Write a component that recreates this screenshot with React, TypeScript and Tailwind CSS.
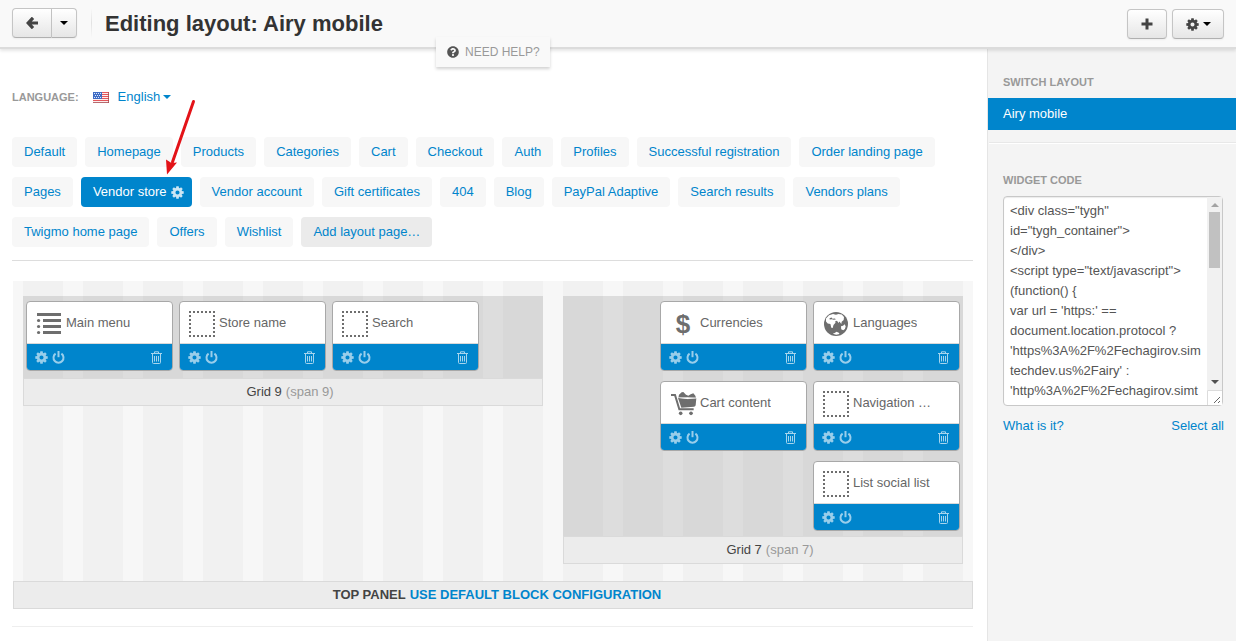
import type { ReactNode } from "react";
import { FaQuestionCircle } from "react-icons/fa";

function Gear({ className = "" }: { className?: string }) {
  return (
    <svg viewBox="0 0 14 14" className={`size-[13px] shrink-0 ${className}`} aria-hidden="true">
      <circle cx="7" cy="7" r="3.65" fill="none" stroke="currentColor" strokeWidth="2.9" />
      {[0, 45, 90, 135, 180, 225, 270, 315].map((a) => (
        <path key={a} d="M5.4 2.8 5.7.3h2.6l.3 2.5z" fill="currentColor" transform={`rotate(${a} 7 7)`} />
      ))}
    </svg>
  );
}

function Power() {
  return (
    <svg viewBox="0 0 13 13" className="size-[13px] opacity-60" fill="none" stroke="currentColor" aria-hidden="true">
      <path d="M3.6 2.6a5 5 0 1 0 5.8 0" strokeWidth="2" />
      <path d="M6.5 0v6.2" strokeWidth="2" />
    </svg>
  );
}

function Trash() {
  return (
    <svg viewBox="0 0 11 13" className="h-[13px] w-[11px] opacity-65" fill="none" stroke="currentColor" aria-hidden="true">
      <path d="M0 2.5h11M3.5 2.5V.8h4v1.7M1.5 2.5v9q0 1 1 1h6q1 0 1-1v-9M3.5 5v5.5M5.5 5v5.5M7.5 5v5.5" />
    </svg>
  );
}

function Caret({ className = "" }: { className?: string }) {
  return (
    <svg viewBox="0 0 8 4" className={`h-1 w-2 shrink-0 ${className}`} fill="currentColor" aria-hidden="true">
      <path d="M0 0h8L4 4z" />
    </svg>
  );
}

function Flag() {
  return (
    <svg viewBox="0 0 16 11" className="h-[11px] w-4 shrink-0" aria-hidden="true">
      <path fill="#fbeeee" d="M0 0h16v11H0z" />
      <path stroke="#e4565b" d="M0 .5h16M0 2.5h16M0 4.5h16M0 6.5h16M0 8.5h16" />
      <path stroke="#a8494d" d="M0 10.5h16M15.5 0v11" strokeOpacity=".8" />
      <path fill="#3f6cc4" d="M0 0h9v7H0z" />
      <path stroke="#dfe9fa" strokeDasharray="1 1" d="M1 1.5h7M2 3.5h6M1 5.5h7" />
    </svg>
  );
}

const DottedIcon = () => (
  <svg viewBox="0 0 26 26" className="size-[26px]" stroke="#6e6e6e" strokeWidth="2" strokeDasharray="2 2" aria-hidden="true">
    <path fill="none" d="M0 1h26M0 25h26M1 4v20M25 4v20" />
  </svg>
);

const MenuIcon = () => (
  <svg viewBox="0 0 26 26" className="size-[26px]" fill="#6e6e6e" aria-hidden="true">
    <path d="M1 2h24v3H1zM7 8h18v3H7zM7 14h18v3H7zM7 20h18v3H7z" />
    <circle cx="2.6" cy="9.5" r="1.6" />
    <circle cx="2.6" cy="15.5" r="1.6" />
    <circle cx="2.6" cy="21.5" r="1.6" />
  </svg>
);

const DollarIcon = () => (
  <span className="w-[26px] text-center text-[26px] leading-[26px] font-bold text-[#6e6e6e]">$</span>
);

const GlobeIcon = () => (
  <svg viewBox="-1 -1 26 26" className="size-[26px]" aria-hidden="true">
    <circle cx="12" cy="12" r="12" fill="#6e6e6e" />
    <path
      fill="#fff"
      d="M2 6.5 5 3.300 9 2l3 .7L14.500 2l3.300.6L20 5l-.3 3-2 1.800L17.300 12l-1.800-2.500-1 1.500-1.500-2.300-1.800.5.300 1.500-2 2.300-.8 3-1.400-.2L6.400 12l-2.700-.4L2 9.500z"
    />
    <path fill="#6e6e6e" d="m5.500 6.200 2-.7 1 1.200 2.500-.2.800 1-2.300.2-1.500-.4-2.300.2z" />
    <path fill="#fff" d="m17 14.300 2-.5 1.700-1.600 1 2.300-.8 2.500-1.700 1.200-2-.9zM8.700 21.800l2-.8 1.800-1.200 2.300.9.700 1.300-3.300.7z" />
  </svg>
);

const CartIcon = () => (
  <svg viewBox="345 333 78 78" className="size-[26px] overflow-visible" aria-hidden="true">
    <path fill="none" stroke="#6e6e6e" strokeWidth="6" d="M348 345h12l13 43h43" />
    <path fill="#6e6e6e" d="m370 353 2-9 8-7 5-1 8 8 7 3 7-4 8-3 6 7 2 6-26-1z" />
    <path fill="#6e6e6e" d="m369 354 28 3 27-2-2 21q-1 4-5 4l-38 3z" />
    <path fill="none" stroke="#fff" strokeWidth="1.6" d="m370 352 28 4 26-2" />
    <circle cx="377" cy="400" r="5.5" fill="#6e6e6e" />
    <circle cx="408" cy="400" r="5.5" fill="#6e6e6e" />
  </svg>
);

function Block({ name, icon = <DottedIcon /> }: { name: string; icon?: ReactNode }) {
  return (
    <article className="w-[147px] overflow-hidden rounded border border-[#a8a8a8] bg-white">
      <div className="flex h-[42px] gap-1 border-b border-[#d9d9d9] pt-[9px] pr-2 pl-[9px]">
        <span className="flex size-[26px] shrink-0">{icon}</span>
        <span className="truncate pt-[2px] text-[#666]">{name}</span>
      </div>
      <div className="flex h-[26px] items-center gap-1 bg-[#0085cc] pr-[10px] pl-2 text-white">
        <button type="button" aria-label={`${name} settings`}>
          <Gear className="opacity-60" />
        </button>
        <button type="button" aria-label={`Switch ${name} off`}>
          <Power />
        </button>
        <button type="button" aria-label={`Delete ${name}`} className="ml-auto">
          <Trash />
        </button>
      </div>
    </article>
  );
}

function GridFooter({ name, span }: { name: string; span: number }) {
  return (
    <footer className="flex h-7 items-center justify-center gap-1 border border-[#dadada] bg-[#ececec] pl-[14px]">
      <span className="text-[#444]">{name}</span>
      <span className="text-[#999]">(span {span})</span>
    </footer>
  );
}

function ScrollTrack() {
  return (
    <div className="pointer-events-none absolute top-px right-px flex h-52 w-[15px] flex-col items-center bg-[#f1f1f1]" aria-hidden="true">
      <svg viewBox="0 0 8 4" className="mt-[6px] h-1 w-2" fill="#a3a3a3">
        <path d="M0 4h8L4 0z" />
      </svg>
      <div className="mt-[5px] h-14 w-[11px] bg-[#c1c1c1]" />
      <Caret className="mt-auto mb-[6px] text-[#505050]" />
      <svg viewBox="0 0 15 15" className="size-[15px] bg-white" fill="none">
        <path d="M.5 15V.5H15" stroke="#dcdcdc" />
        <path d="m7 13 6-6m-2 6 2-2" stroke="#666" />
      </svg>
    </div>
  );
}

const tabs = [
  "Default", "Homepage", "Products", "Categories", "Cart", "Checkout", "Auth", "Profiles",
  "Successful registration", "Order landing page", "Pages", "Vendor store", "Vendor account",
  "Gift certificates", "404", "Blog", "PayPal Adaptive", "Search results", "Vendors plans",
  "Twigmo home page", "Offers", "Wishlist",
];

const widgetCode = `<div class="tygh" id="tygh_container">
</div>
<script type="text/javascript">
(function() {
var url = 'https:' == document.location.protocol ? 'https%3A%2F%2Fechagirov.simtechdev.us%2Fairy' : 'http%3A%2F%2Fechagirov.simtechdev.us%2Fairy';
`;

const buttonLook =
  "flex h-[30px] items-center justify-center border border-[#c5c5c5] border-b-[#b0b0b0] bg-linear-to-b from-white to-[#e6e6e6] text-[#444] shadow-xs";

export default function App() {
  return (
    <div className="flex min-h-screen flex-col bg-white font-['Liberation_Sans',Arial,sans-serif] text-[13px] leading-5 text-[#444]">
      <header className="relative z-10 flex h-[49px] items-start border-b-2 border-[#dcdcdc] bg-[#f9f9f9] px-3 pt-2 shadow-[0_2px_3px_rgba(0,0,0,0.1)]">
        <div className="flex">
          <button type="button" aria-label="Back" className={`${buttonLook} w-10 rounded-l`}>
            <svg viewBox="0 0 12 12" className="size-3" fill="none" stroke="currentColor" strokeWidth="3.2" aria-hidden="true">
              <path d="M7 .8 2.2 6 7 11.2M2.500 6H12" />
            </svg>
          </button>
          <button type="button" aria-label="Recent pages" className={`${buttonLook} w-[25px] rounded-r border-l-0`}>
            <Caret className="text-black" />
          </button>
        </div>
        <div className="ml-[14px] h-[30px] w-px bg-linear-to-b from-[#f9f9f9] via-[#e2e2e2] to-[#f9f9f9]" />
        <h1 className="ml-[13px] text-[22px] leading-8 font-bold text-[#333]">Editing layout: Airy mobile</h1>
        <div className="ml-auto flex gap-[5px] pt-px">
          <button type="button" aria-label="Add" className={`${buttonLook} w-10 rounded`}>
            <svg viewBox="0 0 12 12" className="size-3" stroke="currentColor" strokeWidth="3" aria-hidden="true">
              <path d="M6 .5v11M.5 6h11" />
            </svg>
          </button>
          <button type="button" aria-label="Settings" className={`${buttonLook} w-[52px] gap-1 rounded`}>
            <Gear />
            <Caret className="text-black" />
          </button>
        </div>
        <button
          type="button"
          className="absolute top-[37px] left-[436px] flex h-[30px] items-center gap-[6px] bg-[#f9f9f9] pr-[10px] pl-[11px] text-[12px] text-[#999] shadow-[0_2px_3px_rgba(0,0,0,0.18)]"
        >
          <FaQuestionCircle className="size-3 text-[#555]" />
          NEED HELP?
        </button>
      </header>

      <div className="flex grow">
        <main className="relative min-w-0 grow pt-[38px] pr-[14px] pb-[14px] pl-3">
          <div className="flex items-center">
            <label htmlFor="language" className="text-[11px] font-bold text-[#999]">LANGUAGE:</label>
            <span className="ml-[14px]">
              <Flag />
            </span>
            <div className="relative ml-[9px] flex items-center text-[#0085cc]">
              <select id="language" className="h-5 appearance-none pr-[10px]">
                <option>English</option>
              </select>
              <Caret className="pointer-events-none absolute right-0" />
            </div>
          </div>

          <nav className="mt-[30px] flex flex-wrap gap-x-2 gap-y-[10px]">
            {tabs.map((t) =>
              t === "Vendor store" ? (
                <a key={t} href="#vendor-store" className="flex items-center gap-1 rounded bg-[#0085cc] py-[5px] pr-2 pl-3 text-white">
                  {t}
                  <Gear className="opacity-80" />
                </a>
              ) : (
                <a key={t} href="#page" className="rounded bg-[#f7f7f7] px-3 py-[5px] text-[#0085cc]">
                  {t}
                </a>
              ),
            )}
            <a href="#add" className="rounded bg-[#ebebeb] px-3 py-[5px] text-[#0085cc]">Add layout page…</a>
          </nav>

          <hr className="mt-[13px] border-[#ddd]" />

          <section className="mt-5 ml-px">
            <div className="grid grid-cols-16 items-start bg-[#f7f7f7] bg-[linear-gradient(to_right,transparent_16.67%,#f1f1f1_16.67%,#f1f1f1_83.33%,transparent_83.33%)] bg-[length:6.25%_100%] pt-[15px] pb-[17px]">
              <div className="col-span-9 px-[10px]">
                <div className="flex min-h-[82px] flex-wrap content-start gap-x-[6px] gap-y-[10px] bg-black/10 px-[3px] py-[5px]">
                  <Block name="Main menu" icon={<MenuIcon />} />
                  <Block name="Store name" />
                  <Block name="Search" />
                </div>
                <GridFooter name="Grid 9" span={9} />
              </div>
              <div className="col-span-7 px-[10px]">
                <div className="flex flex-wrap justify-end gap-x-[6px] gap-y-[10px] bg-black/10 px-[3px] py-[5px]">
                  <Block name="Currencies" icon={<DollarIcon />} />
                  <Block name="Languages" icon={<GlobeIcon />} />
                  <Block name="Cart content" icon={<CartIcon />} />
                  <Block name="Navigation …" />
                  <Block name="List social list" />
                </div>
                <GridFooter name="Grid 7" span={7} />
              </div>
            </div>
            <div className="flex h-7 items-center justify-center gap-1 border border-[#dadada] bg-[#ececec] pl-2 font-bold">
              <span>TOP PANEL</span>
              <a href="#default" className="text-[#0085cc]">USE DEFAULT BLOCK CONFIGURATION</a>
            </div>
          </section>

          <hr className="mt-[17px] border-[#eee]" />

          <svg viewBox="0 0 34 80" className="pointer-events-none absolute top-[48px] left-[164px] h-20 w-[34px]" aria-hidden="true">
            <path d="M29.5 4.5 8.5 65" stroke="#e31318" strokeWidth="3" strokeLinecap="round" />
            <path d="M3 77.500 2 62.500l5.500 3.500 5.500-.5z" fill="#e31318" />
          </svg>
        </main>

        <aside className="w-[249px] shrink-0 border-l border-[#e5e5e5] bg-[#f4f4f4] pt-[23px]">
          <h2 className="px-[15px] text-[11px] font-bold text-[#999]">SWITCH LAYOUT</h2>
          <a href="#airy-mobile" className="mt-[6px] block bg-[#0085cc] px-[15px] py-[6px] text-white">Airy mobile</a>
          <div className="mt-3 ml-px h-[2px] border-t border-[#e8e8e8] bg-white" />
          <div className="pt-[26px] pr-3 pl-[15px]">
            <label htmlFor="widget-code" className="block text-[11px] font-bold text-[#999]">WIDGET CODE</label>
            <div className="relative mt-[6px] w-[220px]">
              <textarea
                id="widget-code"
                readOnly
                defaultValue={widgetCode}
                className="block h-[210px] w-full resize-none overflow-y-auto rounded border border-[#c8c8c8] bg-white py-1 pr-[21px] pl-[6px] text-[#555] shadow-[inset_0_1px_1px_rgba(0,0,0,0.08)] [scrollbar-width:none]"
              />
              <ScrollTrack />
            </div>
            <div className="mt-[10px] flex justify-between text-[#0085cc]">
              <a href="#help">What is it?</a>
              <button type="button">Select all</button>
            </div>
          </div>
        </aside>
      </div>
    </div>
  );
}
